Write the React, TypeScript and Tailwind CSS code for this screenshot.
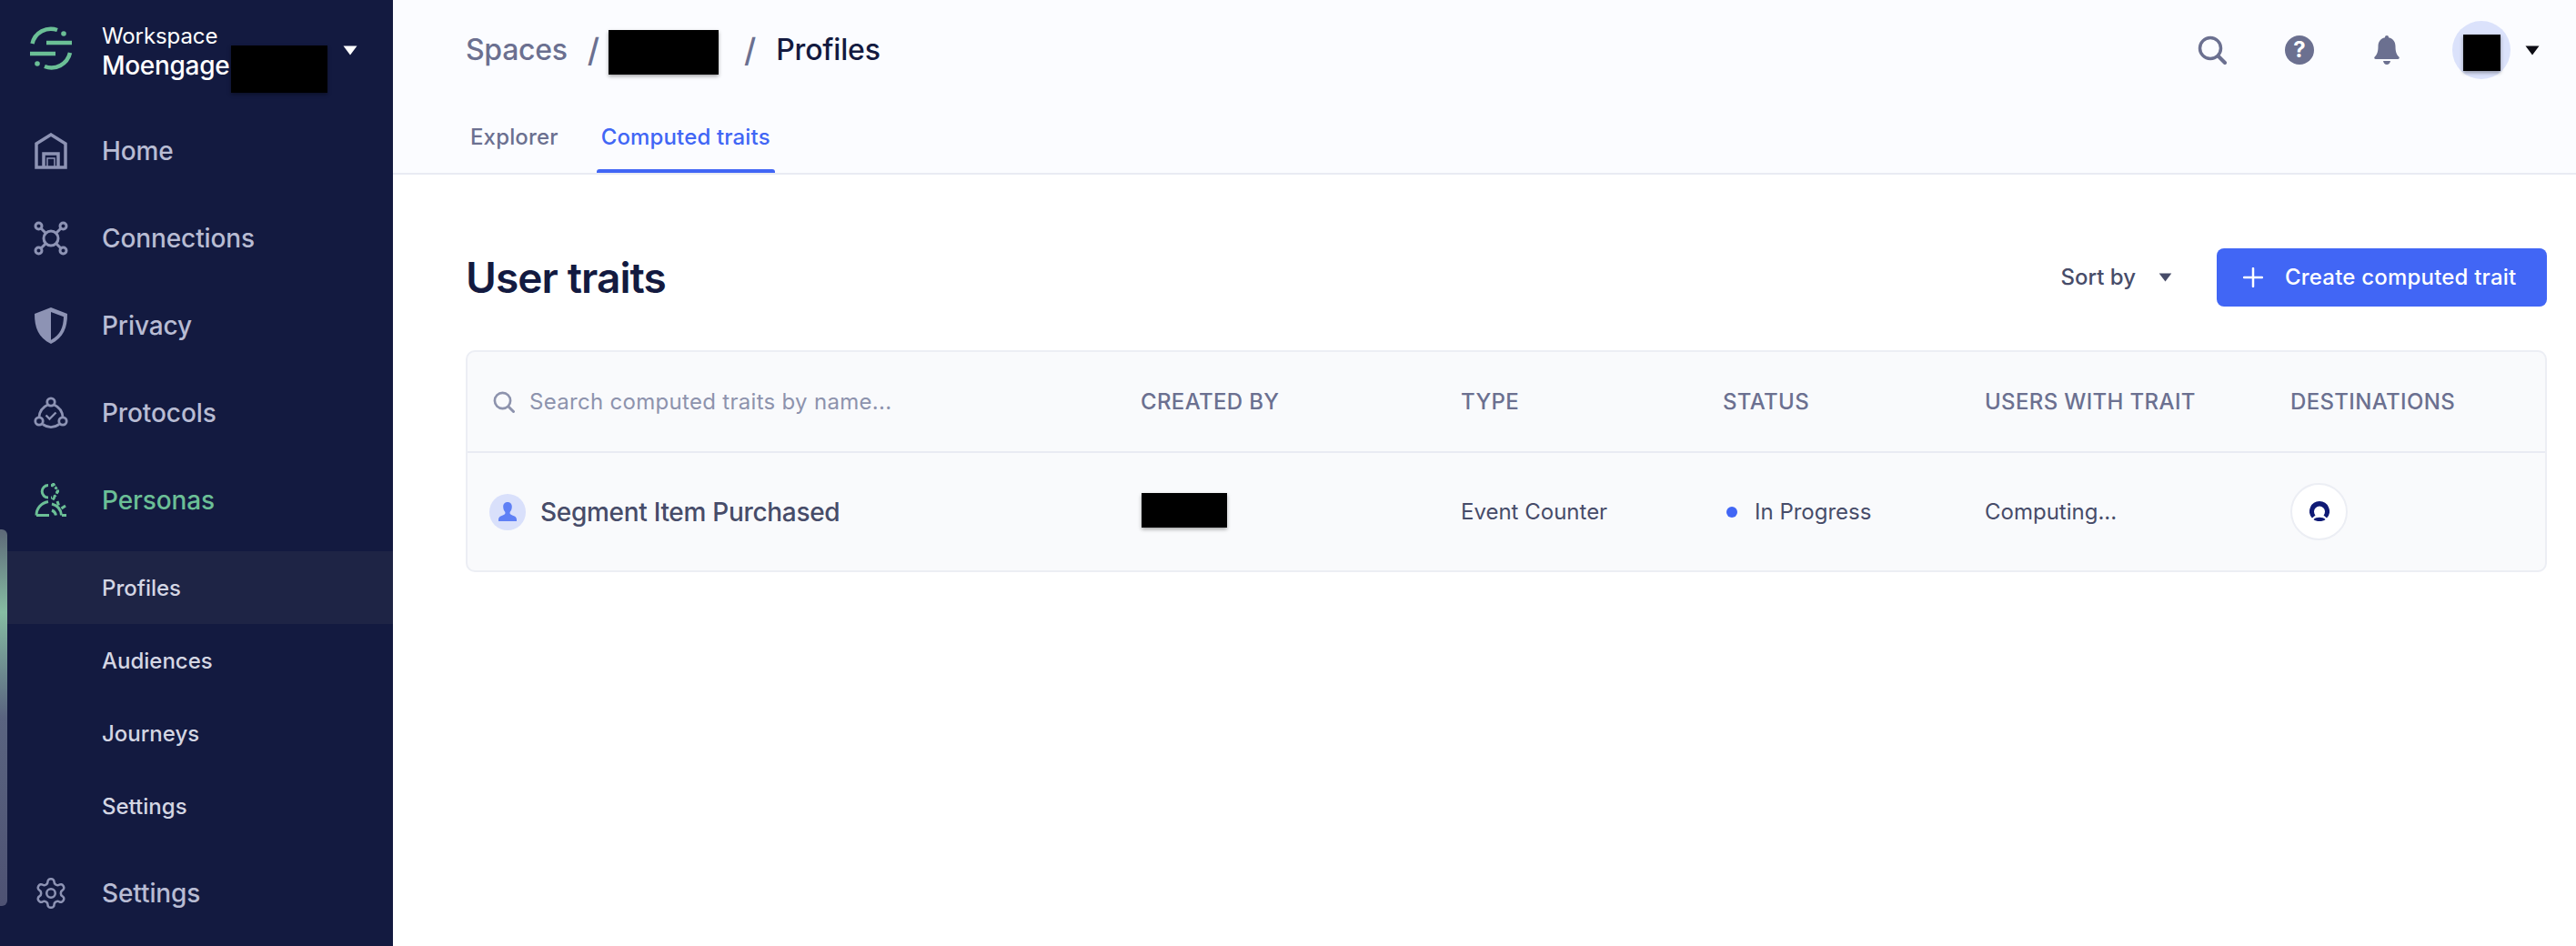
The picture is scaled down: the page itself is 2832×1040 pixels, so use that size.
const font = "font-['Inter',sans-serif]"

function Redacted({ className }: { className: string }) {
  return <div className={`bg-black shadow-[0_2px_4px_rgba(0,0,0,0.35)] ${className}`} />
}

function Caret({ className }: { className: string }) {
  return (
    <svg viewBox="0 0 16 11" className={className} fill="currentColor">
      <path d="M0.5 0.5h15L8 10.5z" />
    </svg>
  )
}

function SegmentLogo() {
  return (
    <svg viewBox="0 0 48 48" className="h-12 w-12" fill="none" stroke="#6bbf96" strokeWidth="4.5">
      <path d="M3.5 19A21 21 0 0 1 31 4" />
      <path d="M19 18h28" />
      <path d="M1 30h28" />
      <path d="M45 29A21 21 0 0 1 17 44" />
      <circle cx="38" cy="8" r="2.800" fill="#6bbf96" stroke="none" />
      <circle cx="9" cy="41" r="2.800" fill="#6bbf96" stroke="none" />
    </svg>
  )
}

function HomeIcon() {
  return (
    <svg viewBox="0 0 36 40" className="h-10 w-9" fill="none" stroke="#8d93b4" strokeWidth="3.5">
      <path d="M2 38V12L18 2l16 10v26z" />
      <path d="M10 38V23h16v15" strokeWidth="3.5" />
      <path d="M14 38V28h8v10" strokeWidth="1.5" />
    </svg>
  )
}

function ConnectionsIcon() {
  return (
    <svg viewBox="0 0 38 38" className="h-[38px] w-[38px]" fill="none" stroke="#8d93b4" strokeWidth="3">
      <circle cx="19" cy="19" r="8" />
      <circle cx="5.5" cy="5.5" r="3.5" />
      <circle cx="32.5" cy="5.5" r="3.5" />
      <circle cx="5.5" cy="32.5" r="3.5" />
      <circle cx="32.5" cy="32.5" r="3.5" />
      <path d="M8 8l5 5M30 8l-5 5M8 30l5-5M30 30l-5-5" />
    </svg>
  )
}

function ShieldIcon() {
  return (
    <svg viewBox="0 0 38 42" className="h-[42px] w-[38px]">
      <path d="M19 1L37 8c0 15-4 26-18 33C5 34 1 23 1 8z" fill="#8d93b4" />
      <path d="M19 6l14 5.200c-.4 11.800-3.600 19.800-14 25.500z" fill="#131a40" />
    </svg>
  )
}

function ProtocolsIcon() {
  return (
    <svg viewBox="0 0 38 38" className="h-[38px] w-[38px]" fill="none" stroke="#8d93b4" strokeWidth="2.800">
      <circle cx="19" cy="7" r="4.200" />
      <circle cx="6" cy="28" r="4.200" />
      <circle cx="32" cy="28" r="4.200" />
      <path d="M15.500 10C10 12.500 6.500 17.500 6 23.500M22.500 10C28 12.500 31.500 17.500 32 23.500M10 31.500c5.500 4 12.500 4 18 0" />
      <path d="M13.500 21.500l4 4 7-7" strokeWidth="2.400" />
    </svg>
  )
}

function PersonasIcon() {
  return (
    <svg viewBox="0 0 36 38" className="h-[38px] w-9" fill="none" stroke="#6bbf96" strokeWidth="3">
      <path d="M15 2.500a6.800 6.800 0 1 0 0 13.600" />
      <path d="M18 2.500a6.500 6.500 0 0 1 0 13.500" strokeWidth="3" strokeDasharray="3 2" />
      <path d="M20 0l2 3M27 9h-3M20 18.500l2-3" />
      <path d="M2 35.500C2 28 7 22 15 20.500" />
      <path d="M2 35.500h14" />
      <path d="M19 23c6 1.500 10 6 10.500 12.500M19 30c2.500 1 4 3 4.500 5.500" />
      <path d="M25 20l1.500 4.500M34 25l-4.500 3M35 35.500h-5" />
    </svg>
  )
}

function GearIcon() {
  return (
    <svg viewBox="0 0 24 24" className="h-[38px] w-[38px]" fill="none" stroke="#8d93b4" strokeWidth="1.600" strokeLinejoin="round">
      <path d="M12.220 2h-.440a2 2 0 0 0-2 2v.180a2 2 0 0 1-1 1.730l-.430.250a2 2 0 0 1-2 0l-.150-.080a2 2 0 0 0-2.730.730l-.220.380a2 2 0 0 0 .730 2.730l.150.100a2 2 0 0 1 1 1.720v.510a2 2 0 0 1-1 1.740l-.150.090a2 2 0 0 0-.730 2.730l.220.380a2 2 0 0 0 2.730.730l.150-.080a2 2 0 0 1 2 0l.430.250a2 2 0 0 1 1 1.730V20a2 2 0 0 0 2 2h.440a2 2 0 0 0 2-2v-.180a2 2 0 0 1 1-1.730l.430-.250a2 2 0 0 1 2 0l.150.080a2 2 0 0 0 2.730-.730l.220-.390a2 2 0 0 0-.730-2.730l-.150-.080a2 2 0 0 1-1-1.740v-.500a2 2 0 0 1 1-1.740l.150-.090a2 2 0 0 0 .730-2.730l-.220-.380a2 2 0 0 0-2.730-.730l-.150.080a2 2 0 0 1-2 0l-.430-.250a2 2 0 0 1-1-1.730V4a2 2 0 0 0-2-2z" />
      <circle cx="12" cy="12" r="3" />
    </svg>
  )
}

function SearchIcon({ className, color }: { className: string; color: string }) {
  return (
    <svg viewBox="0 0 32 32" className={className} fill="none" stroke={color} strokeWidth="3.500" strokeLinecap="round">
      <circle cx="14" cy="14" r="11.500" />
      <path d="M23 23l7 7" strokeWidth="4" />
    </svg>
  )
}

function PersonGlyph() {
  return (
    <svg viewBox="0 0 20 21" className="h-[21px] w-5" fill="#5f80f5">
      <path d="M10 0c3.200 0 4.800 2.300 4.800 5 0 2.500-.9 4.600-2.200 6v1.500c0 1 2.700 1.800 5 3 1.400.7 2.400 1.900 2.400 3.500v2H0v-2c0-1.600 1-2.800 2.400-3.500 2.300-1.200 5-2 5-3V11C6.100 9.600 5.200 7.500 5.200 5 5.200 2.300 6.800 0 10 0z" />
    </svg>
  )
}

function DestinationGlyph() {
  return (
    <svg viewBox="0 0 22 23" className="h-[23px] w-[22px]" fill="#0f1a75">
      <path d="M11 0a11 11 0 0 1 8 18.500L15.500 15.500a6 6 0 1 0-9 0L3 18.500A11 11 0 0 1 11 0z" />
      <path d="M4.500 20C7 17 15 17 17.500 20 15 22.800 7 22.800 4.500 20z" />
    </svg>
  )
}

const mainItems = [
  { label: "Home", icon: HomeIcon },
  { label: "Connections", icon: ConnectionsIcon },
  { label: "Privacy", icon: ShieldIcon },
  { label: "Protocols", icon: ProtocolsIcon },
]

const subItems = ["Profiles", "Audiences", "Journeys", "Settings"]

function NavRow({ label, icon: Icon, active }: { label: string; icon: React.ElementType; active?: boolean }) {
  return (
    <div className={`flex h-24 items-center text-[28px] font-medium tracking-[-0.1px] ${active ? "text-[#6bbf96]" : "text-[#b8bcd3]"}`}>
      <div className="flex w-[112px] justify-center">
        <Icon />
      </div>
      {label}
    </div>
  )
}

function Sidebar() {
  return (
    <aside className="relative flex h-[1040px] w-[432px] shrink-0 flex-col bg-[#131a40]">
      <div className="flex h-[118px] items-start pt-6">
        <div className="flex w-[112px] justify-center pt-[5px]">
          <SegmentLogo />
        </div>
        <div className="text-white">
          <div className="pt-[2px] text-[24px] leading-[28px] tracking-[-0.1px]">Workspace</div>
          <div className="flex items-start">
            <span className="text-[28px] leading-[36px] font-medium tracking-[-0.3px]">Moengage</span>
            <Redacted className="ml-[2px] -mt-[4px] h-[52px] w-[106px]" />
          </div>
        </div>
        <Caret className="mt-[26px] ml-[17px] h-[11px] w-4 text-white" />
      </div>
      {mainItems.map((item) => (
        <NavRow key={item.label} label={item.label} icon={item.icon} />
      ))}
      <NavRow label="Personas" icon={PersonasIcon} active />
      <div className="mt-2">
        {subItems.map((label, i) => (
          <div
            key={label}
            className={`flex h-20 items-center pt-[2px] pl-[112px] text-[24px] font-medium text-[#d4d6e3] ${i === 0 ? "bg-[#1e2445]" : ""}`}
          >
            {label}
          </div>
        ))}
      </div>
      <div className="mt-2">
        <NavRow label="Settings" icon={GearIcon} />
      </div>
      <div className="absolute top-[582px] left-0 h-[414px] w-2 rounded-r-[6px] bg-[linear-gradient(to_bottom,#5d6878_0%,#86bda3_22%,#5a6480_50%,#4e5273_100%)]" />
    </aside>
  )
}

function TopBar() {
  return (
    <header className="h-[192px] border-b-2 border-[#e9ebf3] bg-[#fbfcff]">
      <div className="flex h-[110px] items-center pr-10 pl-20">
        <span className="text-[32px] font-medium tracking-[-0.3px] text-[#6b7090]">Spaces</span>
        <span className="ml-[22px] text-[36px] font-medium text-[#6b7090]">/</span>
        <Redacted className="mt-[4px] ml-[10px] h-[49px] w-[121px]" />
        <span className="ml-[28px] text-[36px] font-medium text-[#6b7090]">/</span>
        <span className="ml-[22px] text-[32px] font-medium tracking-[-0.2px] text-[#131a40]">Profiles</span>
        <div className="ml-auto flex items-center">
          <SearchIcon className="h-8 w-8" color="#6b7090" />
          <div className="ml-[64px] flex h-8 w-8 items-center justify-center rounded-full bg-[#6b7090] text-[24px] leading-none font-bold text-white">
            ?
          </div>
          <svg viewBox="0 0 28 32" className="ml-[66px] h-8 w-7" fill="#6b7090">
            <path d="M14 0c1.300 0 2 .9 2 2.200C21 3.400 23.500 7 23.500 12c0 6 1.200 9 3.800 11.500.9.900.5 2.500-1 2.500H1.700c-1.500 0-1.900-1.600-1-2.500C3.300 21 4.500 18 4.500 12 4.500 7 7 3.400 12 2.200 12 .9 12.700 0 14 0z" />
            <path d="M10 28h8c-.5 2.400-2 4-4 4s-3.500-1.600-4-4z" />
          </svg>
          <div className="relative ml-[58px] h-16 w-16 rounded-full bg-[#dbe2fb]">
            <Redacted className="absolute top-[15px] left-3 h-10 w-[41px]" />
          </div>
          <Caret className="ml-4 h-[11px] w-4 text-[#0c0c14]" />
        </div>
      </div>
      <div className="flex h-20 pl-20 text-[24px] font-medium tracking-[0.15px]">
        <div className="mr-[42px] pt-[23px] pl-[5px] text-[#6b7090]">Explorer</div>
        <div className="relative w-[196px] pt-[23px] pl-[5px] text-[#4166f5]">
          Computed traits
          <div className="absolute bottom-0 left-0 h-1 w-full rounded-t-[3px] bg-[#4166f5]" />
        </div>
      </div>
    </header>
  )
}

const tableCols = "grid grid-cols-[740px_352px_288px_288px_336px_1fr] items-center"

function TraitsTable() {
  return (
    <div className="rounded-[10px] border-2 border-[#eceef4] bg-[#f9fafc]">
      <div className={`${tableCols} h-[111px] border-b-2 border-[#e9ebf3] text-[24px] font-medium tracking-[0.35px] text-[#6b7090]`}>
        <div className="flex items-center pl-[28px] font-normal tracking-[0.3px] text-[#8d93ad]">
          <SearchIcon className="h-6 w-6" color="#8d93ad" />
          <span className="ml-4">Search computed traits by name...</span>
        </div>
        <div>CREATED BY</div>
        <div>TYPE</div>
        <div>STATUS</div>
        <div>USERS WITH TRAIT</div>
        <div>DESTINATIONS</div>
      </div>
      <div className={`${tableCols} h-[129px] text-[24px] text-[#474c69]`}>
        <div className="flex items-center pl-6">
          <div className="flex h-10 w-10 items-center justify-center rounded-full bg-[#d9e0fb]">
            <PersonGlyph />
          </div>
          <span className="ml-4 text-[28px] font-medium tracking-[-0.3px]">Segment Item Purchased</span>
        </div>
        <Redacted className="mb-1 ml-[1px] h-[38px] w-[94px]" />
        <div>Event Counter</div>
        <div className="flex items-center">
          <span className="ml-1 h-3 w-3 rounded-full bg-[#4166f5]" />
          <span className="ml-[19px]">In Progress</span>
        </div>
        <div>Computing...</div>
        <div className="flex h-[63px] w-[63px] items-center justify-center rounded-full border-2 border-[#eceef4] bg-white">
          <DestinationGlyph />
        </div>
      </div>
    </div>
  )
}

export default function App() {
  return (
    <div className={`flex h-[1040px] w-[2832px] overflow-hidden bg-white ${font}`}>
      <Sidebar />
      <main className="min-w-0 flex-1">
        <TopBar />
        <div className="pr-8 pl-20">
          <div className="flex h-[193px] items-center pt-[32px]">
            <h1 className="pt-[2px] text-[46px] font-semibold tracking-[-0.9px] text-[#131a40]">User traits</h1>
            <div className="ml-auto flex items-center">
              <span className="text-[24px] font-medium text-[#474c69]">Sort by</span>
              <Caret className="ml-[25px] h-[10px] w-[15px] text-[#474c69]" />
              <button className="ml-[49px] flex h-16 w-[363px] items-center rounded-[8px] bg-[#4166f5] pl-[29px] text-[24px] font-medium tracking-[0.2px] text-white">
                <svg viewBox="0 0 22 22" className="h-[22px] w-[22px]" stroke="white" strokeWidth="2.500" strokeLinecap="round">
                  <path d="M11 1v20M1 11h20" />
                </svg>
                <span className="ml-[24px]">Create computed trait</span>
              </button>
            </div>
          </div>
          <TraitsTable />
        </div>
      </main>
    </div>
  )
}
